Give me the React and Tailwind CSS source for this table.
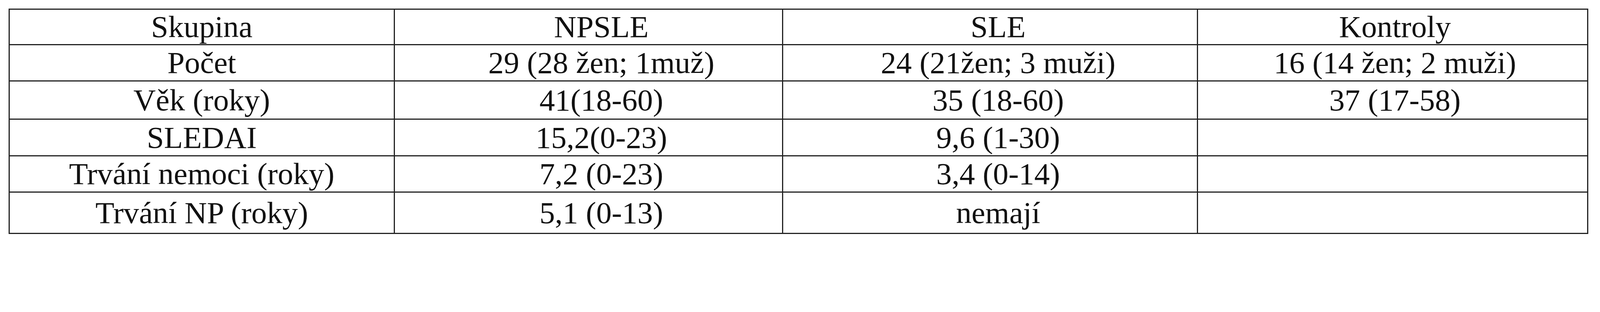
// sizes are in vw so the table keeps the reference's proportions at any window width
const rows = [
  { h: 'h-[2.206vw]', cells: ['Skupina', 'NPSLE', 'SLE', 'Kontroly'] },
  { h: 'h-[2.283vw]', cells: ['Počet', '29 (28 žen; 1muž)', '24 (21žen; 3 muži)', '16 (14 žen; 2 muži)'] },
  { h: 'h-[2.38vw]', cells: ['Věk (roky)', '41(18-60)', '35 (18-60)', '37 (17-58)'] },
  { h: 'h-[2.302vw]', cells: ['SLEDAI', '15,2(0-23)', '9,6 (1-30)', ''] },
  { h: 'h-[2.283vw]', cells: ['Trvání nemoci (roky)', '7,2 (0-23)', '3,4 (0-14)', ''] },
  { h: 'h-[2.573vw]', cells: ['Trvání NP (roky)', '5,1 (0-13)', 'nemají', ''] },
];

const cols = [
  'w-[24.066vw]',
  'w-[24.279vw] pl-[1.6vw]',
  'w-[25.924vw] pl-[1vw]',
  'w-[24.376vw] pl-[0.3vw]',
];

export default function App() {
  return (
    <div className="bg-white pt-[0.542vw] pl-[0.542vw] pb-[0.5vw] font-['Liberation_Serif',serif] text-[1.935vw] leading-none text-[#111]">
      <div className="w-[98.72vw] border-t-[0.097vw] border-l-[0.077vw] border-[#222]">
        {rows.map((r, i) => (
          <div key={i} className={`flex border-b-[0.097vw] border-[#222] ${r.h}`}>
            {r.cells.map((c, j) => (
              <div
                key={j}
                className={`${cols[j]} shrink-0 flex items-center justify-center border-r-[0.077vw] border-[#222] whitespace-nowrap`}
              >
                {c}
              </div>
            ))}
          </div>
        ))}
      </div>
    </div>
  );
}
